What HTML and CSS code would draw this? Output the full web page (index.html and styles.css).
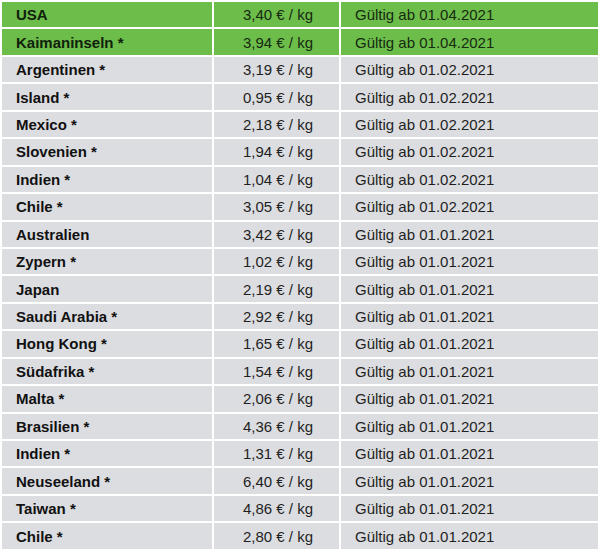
FILE: index.html
```html
<!DOCTYPE html>
<html lang="de">
<head>
<meta charset="utf-8">
<title>Preise</title>
<link rel="stylesheet" href="styles.css">
</head>
<body>
<div class="table">
  <div class="c name hl">USA</div><div class="c price hl">3,40 € / kg</div><div class="c date hl">Gültig ab 01.04.2021</div>
  <div class="c name hl">Kaimaninseln *</div><div class="c price hl">3,94 € / kg</div><div class="c date hl">Gültig ab 01.04.2021</div>
  <div class="c name">Argentinen *</div><div class="c price">3,19 € / kg</div><div class="c date">Gültig ab 01.02.2021</div>
  <div class="c name">Island *</div><div class="c price">0,95 € / kg</div><div class="c date">Gültig ab 01.02.2021</div>
  <div class="c name">Mexico *</div><div class="c price">2,18 € / kg</div><div class="c date">Gültig ab 01.02.2021</div>
  <div class="c name">Slovenien *</div><div class="c price">1,94 € / kg</div><div class="c date">Gültig ab 01.02.2021</div>
  <div class="c name">Indien *</div><div class="c price">1,04 € / kg</div><div class="c date">Gültig ab 01.02.2021</div>
  <div class="c name">Chile *</div><div class="c price">3,05 € / kg</div><div class="c date">Gültig ab 01.02.2021</div>
  <div class="c name">Australien</div><div class="c price">3,42 € / kg</div><div class="c date">Gültig ab 01.01.2021</div>
  <div class="c name">Zypern *</div><div class="c price">1,02 € / kg</div><div class="c date">Gültig ab 01.01.2021</div>
  <div class="c name">Japan</div><div class="c price">2,19 € / kg</div><div class="c date">Gültig ab 01.01.2021</div>
  <div class="c name">Saudi Arabia *</div><div class="c price">2,92 € / kg</div><div class="c date">Gültig ab 01.01.2021</div>
  <div class="c name">Hong Kong *</div><div class="c price">1,65 € / kg</div><div class="c date">Gültig ab 01.01.2021</div>
  <div class="c name">Südafrika *</div><div class="c price">1,54 € / kg</div><div class="c date">Gültig ab 01.01.2021</div>
  <div class="c name">Malta *</div><div class="c price">2,06 € / kg</div><div class="c date">Gültig ab 01.01.2021</div>
  <div class="c name">Brasilien *</div><div class="c price">4,36 € / kg</div><div class="c date">Gültig ab 01.01.2021</div>
  <div class="c name">Indien *</div><div class="c price">1,31 € / kg</div><div class="c date">Gültig ab 01.01.2021</div>
  <div class="c name">Neuseeland *</div><div class="c price">6,40 € / kg</div><div class="c date">Gültig ab 01.01.2021</div>
  <div class="c name">Taiwan *</div><div class="c price">4,86 € / kg</div><div class="c date">Gültig ab 01.01.2021</div>
  <div class="c name">Chile *</div><div class="c price">2,80 € / kg</div><div class="c date">Gültig ab 01.01.2021</div>
</div>
</body>
</html>
```
FILE: styles.css
```css
html, body {
  margin: 0;
  padding: 0;
  background: #ffffff;
}
body {
  font-family: "Liberation Sans", Arial, sans-serif;
  font-size: 15px;
  color: #1f1f1f;
}
.table {
  display: grid;
  grid-template-columns: 210px 125px 257px;
  grid-auto-rows: 25.45px;
  gap: 2px;
  padding: 2px;
  width: 600px;
  box-sizing: border-box;
}
.c {
  background: #dcdde0;
  display: flex;
  align-items: center;
  white-space: nowrap;
}
.c.hl {
  background: #6dbd4b;
  color: #152a10;
}
.name {
  font-weight: bold;
  padding-left: 14px;
  color: #111;
}
.name.hl {
  color: #10210c;
}
.price {
  justify-content: flex-end;
  padding-right: 26px;
}
.date {
  padding-left: 14px;
}
```
